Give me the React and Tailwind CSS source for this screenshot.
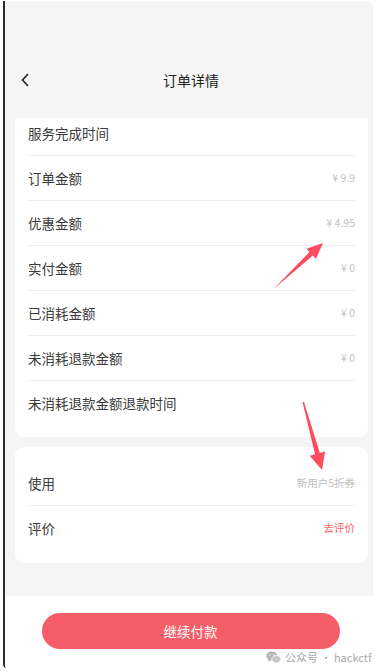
import React from "react";

const font = { fontFamily: '"Noto Sans CJK SC", "Noto Sans", sans-serif' };

function Row({ label, value, valueClass = "text-[#c2c2c2]", divider = true, className = "h-[44px]" }) {
  return (
    <>
      <div className={`flex items-center justify-between ${className}`}>
        <span className="text-[13.5px] text-[#3a3a3a]">{label}</span>
        {value && <span className={`text-[10.5px] ${valueClass}`}>{value}</span>}
      </div>
      {divider && <div className="h-px bg-[#ededed]" />}
    </>
  );
}

export default function App() {
  return (
    <div className="w-[377px] h-[672px] bg-white relative overflow-hidden" style={font}>
      <div className="ml-[3px] mt-[1px] w-[370px] h-[667px] border-l-2 border-[#2b2b2b] rounded-tr-[7px] rounded-bl-[4px] overflow-hidden bg-[#f5f5f5] flex flex-col">
        {/* header */}
        <div className="h-[117px] relative flex items-start shrink-0">
          <div className="absolute left-[15px] top-[71px]">
            <svg width="12" height="16" viewBox="0 0 12 16">
              <polyline points="8,2 2.5,8 8,14" fill="none" stroke="#222" strokeWidth="1.6" />
            </svg>
          </div>
          <div className="w-full text-center pl-[4px] mt-[69px] text-[14px] text-[#222]">订单详情</div>
        </div>

        {/* card 1 */}
        <div className="ml-[10px] mr-[5px] bg-white rounded-b-[9px] px-[13px]">
          <Row label="服务完成时间" className="h-[37px] pb-[7px]" />
          <Row label="订单金额" value="¥ 9.9" />
          <Row label="优惠金额" value="¥ 4.95" />
          <Row label="实付金额" value="¥ 0" />
          <Row label="已消耗金额" value="¥ 0" />
          <Row label="未消耗退款金额" value="¥ 0" />
          <Row label="未消耗退款金额退款时间" divider={false} className="h-[44px] mb-[12px]" />
        </div>

        {/* card 2 */}
        <div className="ml-[10px] mr-[5px] mt-[10px] bg-white rounded-[9px] px-[13px] pt-[14px] pb-[13px]">
          <Row label="使用" value="新用户5折券" valueClass="text-[#bdbdbd]" />
          <Row label="评价" value="去评价" valueClass="text-[#f5636b]" divider={false} />
        </div>

        <div className="flex-1" />

        {/* bottom bar */}
        <div className="h-[72px] bg-white shrink-0 pt-[17px] flex justify-center">
          <button className="ml-[3px] w-[298px] h-[36px] rounded-full bg-[#f55d68] text-white text-[13.5px]">
            继续付款
          </button>
        </div>
      </div>

      {/* annotation arrows */}
      <svg className="absolute left-0 top-0 pointer-events-none" width="377" height="672" viewBox="0 0 377 672">
        <polygon
          points="273,289.5 309.5,252 306.5,248.7 323,243 315.9,259 312.9,255.6"
          fill="#ff4b60"
        />
        <polygon
          points="302.5,402 304,402 319.8,452.9 325.1,451.4 322,470 309.7,455.8 315,454.3"
          fill="#ff4b60"
        />
      </svg>

      {/* watermark */}
      <div className="absolute left-[266px] top-[649px] flex items-center gap-[4px] text-[11px] text-[#a8a8a8]">
        <svg width="15" height="13" viewBox="0 0 15 13">
          <ellipse cx="5.8" cy="5" rx="5.5" ry="4.5" fill="#b5b5b5" />
          <path d="M2.5 8.5 L2 11 L4.8 9.3 Z" fill="#b5b5b5" />
          <ellipse cx="10.3" cy="8.3" rx="4.5" ry="3.8" fill="#c8c8c8" stroke="#fff" strokeWidth="0.8" />
          <circle cx="4" cy="4" r="0.7" fill="#fff" />
          <circle cx="7.6" cy="4" r="0.7" fill="#fff" />
        </svg>
        <span>公众号 · hackctf</span>
      </div>
    </div>
  );
}
